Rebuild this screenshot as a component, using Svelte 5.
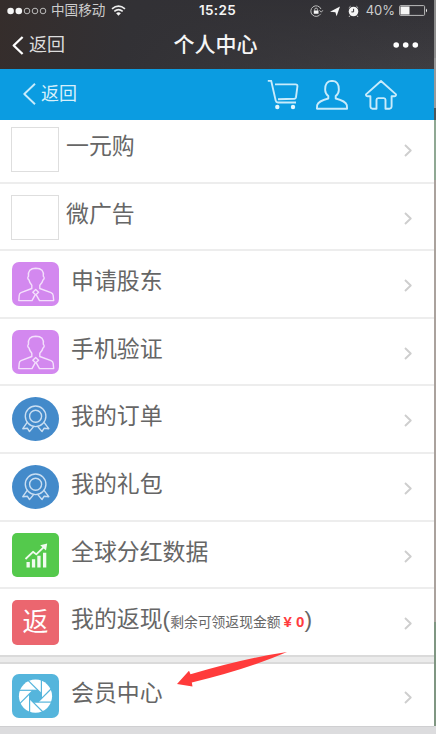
<script>
    const items = [
        { icon: 'blank', label: '一元购' },
        { icon: 'blank', label: '微广告' },
        { icon: 'person', label: '申请股东' },
        { icon: 'person', label: '手机验证' },
        { icon: 'medal', label: '我的订单' },
        { icon: 'medal', label: '我的礼包' },
        { icon: 'chart', label: '全球分红数据' },
        { icon: 'cash', label: '我的返现', note: '剩余可领返现金额', amount: '¥ 0' }
    ];
    const member = [{ icon: 'shutter', label: '会员中心' }];
    const blades = [0, 45, 90, 135, 180, 225, 270, 315];
</script>

{#snippet row(item)}
    <li class="row">
        <span class="icon {item.icon}">
            {#if item.icon === 'person'}
                <svg viewBox="0 0 47 44">
                    <path d="M19.8 26.5 9 30.7Q7.3 31.5 7.2 33.5L6.8 38.6H20L23.3 32.6 20.8 30.2 23.7 27.6 26.6 30.2 24.1 32.6 27.5 38.6H41.7L41.2 33.5Q41 31.5 39 30.7L27.8 26.5V23.2Q30.5 20.5 31 18Q33.2 16 31.3 14.3Q32.4 6.3 23.8 6.2Q15.5 6.3 16.5 14.3Q14.8 16 17 18Q17.5 20.7 19.8 23.2Z" />
                </svg>
            {:else if item.icon === 'medal'}
                <svg viewBox="0 0 47 44">
                    <circle cx="23.6" cy="19.3" r="10.3" />
                    <circle cx="23.6" cy="19.3" r="6" />
                    <path d="M15.2 25.3 10.8 31.7 15.3 31.2 17.5 34.5 21.8 29.4M32 25.3 36.8 31.7 32.2 31.2 30 34.5 25.6 29.4" />
                </svg>
            {:else if item.icon === 'chart'}
                <svg viewBox="0 0 47 44">
                    <path class="bars" d="M14.5 29h3.3v5.5h-3.3zM19.9 26.3h3.3v8.2h-3.3zM25.3 22.7h3.3v11.8h-3.3zM31 19.8h3.3v14.7H31zM28.2 12.2 35.2 10.6 34 17.5Z" />
                    <path d="M13.5 26 21 18.8 24.3 21.4 32 13.8" />
                </svg>
            {:else if item.icon === 'cash'}
                返
            {:else if item.icon === 'shutter'}
                <svg viewBox="0 0 47 44">
                    <circle class="disc" cx="23.5" cy="22.2" r="16.6" />
                    <path class="hole" d="M21 16.2h5l3.5 3.5v5L26 28.2h-5l-3.5-3.5v-5z" />
                    {#each blades as angle}
                        <path class="blade" d="M26 16.3H6" transform="rotate({angle} 23.5 22.2)" />
                    {/each}
                </svg>
            {/if}
        </span>
        <span class="label">{item.label}{#if item.note}(<small>{item.note}<b>{item.amount}</b></small>){/if}</span>
        <svg class="arrow" viewBox="0 0 8 13"><path d="M1 1 6.7 6.5 1 12" /></svg>
    </li>
{/snippet}

<div class="page">
    <div class="phone">
        <div class="top">
            <div class="status">
                <div class="carrier">
                    <svg width="40" height="8" viewBox="0 0 40 8">
                        <circle class="full" cx="3.6" cy="4" r="3.3" />
                        <circle class="full" cx="11.8" cy="4" r="3.3" />
                        <circle cx="20" cy="4" r="2.8" />
                        <circle cx="28" cy="4" r="2.8" />
                        <circle cx="36" cy="4" r="2.8" />
                    </svg>
                    <span>中国移动</span>
                    <svg class="wifi" width="15" height="11" viewBox="0 0 15 11">
                        <path d="M1 3.8Q7.5-1.6 14 3.8M3.3 6.3Q7.5 2.8 11.7 6.3" />
                        <path class="full" d="M5.1 8.2Q7.5 6.3 9.9 8.2L7.5 10.8Z" />
                    </svg>
                </div>
                <time>15:25</time>
                <div class="battery">
                    <svg width="51" height="14" viewBox="0 0 51 14">
                        <path d="M11.7 9.8A5.3 5.3 0 1 1 12 5M10.5 6.3 12.3 8.2 13.8 6.3" />
                        <path d="M5.7 6.6V5.5a1.4 1.4 0 0 1 2.8 0v1.1" />
                        <path class="full" d="M4.8 6.4h4.7v3.4H4.8zM21 7.8 31 2.4 27.6 12.3 26.4 8.3Z" />
                        <circle class="full" cx="44.5" cy="7.5" r="4.8" />
                        <path d="M39.8 3.9 41.6 2.2M49.2 3.9 47.4 2.2M41 11.5 40 13M48 11.5 49 13" />
                        <path class="hands" d="M44.6 4.8V7.9H42.4" />
                    </svg>
                    <span>40%</span>
                    <svg width="29" height="11" viewBox="0 0 29 11">
                        <rect x=".6" y=".6" width="25" height="9.8" rx="1" />
                        <path class="full" d="M1.5 1.5h9v8h-9zM27 3.5q2 2 0 4z" />
                    </svg>
                </div>
            </div>
            <div class="nav">
                <span class="back">
                    <svg width="12" height="19" viewBox="0 0 12 19"><path d="M10.6 1 1.7 9.5 10.6 18" /></svg>
                    返回
                </span>
                <h1>个人中心</h1>
                <svg class="more" width="26" height="6" viewBox="0 0 26 6">
                    <circle cx="3.2" cy="3" r="2.8" />
                    <circle cx="12.7" cy="3" r="2.8" />
                    <circle cx="22.3" cy="3" r="2.8" />
                </svg>
            </div>
        </div>

        <header>
            <span class="back">
                <svg width="13" height="22" viewBox="0 0 13 22"><path d="M12 .8 1.3 11 12 21.2" /></svg>
                返回
            </span>
            <div class="links">
                <svg width="32" height="30" viewBox="0 0 32 30">
                    <path d="M.8.9H4.2L8.7 20.6Q9.1 22.4 11 22.5H29M8 4.4H28.5Q30.6 4.5 30.4 6.5L29 17.2Q28.7 18.6 27.5 18.7L11 19.2" />
                    <circle class="wheel" cx="10.3" cy="27" r="2.2" />
                    <circle class="wheel" cx="26" cy="27" r="2.2" />
                </svg>
                <svg width="32" height="30" viewBox="0 0 32 30">
                    <path d="M12.3 18.5Q2.5 21 1.2 25L.9 28.7H31.1L30.8 25Q29.5 21 19.7 18.5V16Q22.7 13.7 22.8 10.2Q23.2 1 16 .9Q8.8 1 9.2 10.2Q9.3 13.7 12.3 16Z" />
                </svg>
                <svg width="32" height="30" viewBox="0 0 32 30">
                    <path d="M16 1 1 14.4Q.8 16.4 3 16.2H5.4V26.5Q5.6 28.6 7.6 28.7H11.5V19.8Q11.6 18.2 13.2 18.1H18.8Q20.4 18.2 20.5 19.8V28.7H24.4Q26.4 28.6 26.6 26.5V16.2H29Q31.2 16.4 31 14.4Z" />
                </svg>
            </div>
        </header>

        <ul class="list">
            {#each items as item}
                {@render row(item)}
            {/each}
        </ul>
        <ul class="list member">
            {#each member as item}
                {@render row(item)}
            {/each}
        </ul>
        <svg class="pointer" width="112" height="40" viewBox="0 0 112 40">
            <path d="M111 1Q70 7 14.5 23.3L13 19.8 1 33 16.5 35.5 15.8 31.5Q72 18 111 1Z" />
        </svg>
    </div>
    <div class="edge"></div>
</div>

<style>
    :global(body) {
        background: #dcdcde;
    }

    .page {
        display: flex;
        width: 436px;
        height: 734px;
        overflow: hidden;
        font-family: "Liberation Sans", "Noto Sans CJK SC", sans-serif;
    }

    .phone {
        position: relative;
        width: 434px;
    }

    .edge {
        width: 2px;
        height: 726px;
        background: linear-gradient(#8d8d8d 0 58px, #999 58px 108px, #4f5557 108px 120px, #8fa893 120px 180px, #aaa29d 180px 622px, #7f9682 622px);
    }

    svg {
        display: block;
        flex: none;
        fill: none;
        stroke-linejoin: round;
    }

    .top {
        height: 69px;
        background: linear-gradient(100deg, #352d2b, #323135 30%, rgba(50, 49, 53, 0)), linear-gradient(#313035, #3f3e42);
        color: #eee;
    }

    .status {
        display: grid;
        grid-template-columns: 1fr auto 1fr;
        align-items: center;
        height: 21px;
        padding: 0 6px 0 7px;
        font-size: 13.6px;
        line-height: 21px;
    }

    .status svg {
        stroke: #bbb;
        stroke-width: 1;
    }

    .status .full {
        fill: #f5f5f5;
        stroke: none;
    }

    .carrier,
    .battery {
        display: flex;
        align-items: center;
    }

    .carrier span {
        margin: 0 6px 0 4px;
        color: #ccc;
    }

    .status .wifi {
        stroke: #eee;
        stroke-width: 1.6;
    }

    .status time {
        color: #f5f5f5;
        font-family: Inter, sans-serif;
        font-size: 13.5px;
        font-weight: 600;
        letter-spacing: 0.3px;
    }

    .battery {
        justify-content: flex-end;
    }

    .battery span {
        margin: 0 4px 0 6px;
        color: #ccc;
        font-family: Inter, sans-serif;
        font-size: 13px;
    }

    .status .hands {
        stroke: #37363a;
    }

    .nav {
        display: grid;
        grid-template-columns: 1fr auto 1fr;
        align-items: center;
        height: 48px;
        padding: 0 15px 0 12px;
    }

    .back {
        display: flex;
        align-items: center;
        gap: 5px;
        font-size: 18px;
        line-height: 26px;
    }

    .nav .back {
        color: #ddd;
    }

    .nav .back svg {
        stroke: #fff;
        stroke-width: 2.3;
    }

    h1 {
        margin: 0;
        color: #f5f5f5;
        font-size: 21px;
        font-weight: 500;
        line-height: 30px;
    }

    .more {
        justify-self: end;
        fill: #fff;
    }

    header {
        display: flex;
        align-items: center;
        justify-content: space-between;
        box-sizing: border-box;
        height: 51px;
        padding: 0 37px 2px 23px;
        background: #0b9ce1;
        color: #d8f0fb;
    }

    header svg {
        stroke: #c8ebfb;
        stroke-width: 1.9;
    }

    .links {
        display: flex;
        gap: 17px;
        padding-top: 3px;
    }

    header .wheel {
        fill: #e4f6fd;
        stroke: none;
    }

    .list {
        margin: 0;
        padding: 0;
        background: #fff;
        list-style: none;
    }

    .row {
        display: flex;
        align-items: flex-start;
        box-sizing: border-box;
        height: 67.65px;
        padding: 11px 22px 0 12px;
        border-bottom: 2px solid #ededed;
    }

    .row:first-child {
        height: 63.5px;
        padding-top: 6.5px;
    }

    .row:last-child {
        height: 67.6px;
        border-bottom-color: #dadada;
    }

    .icon {
        flex: none;
        width: 47px;
        height: 44px;
        margin-right: 12px;
        border-radius: 7px;
        color: #fff;
    }

    .icon svg {
        width: 47px;
        height: 44px;
        stroke: #f4e0fc;
        stroke-width: 1.4;
    }

    .blank {
        box-sizing: border-box;
        width: 48px;
        height: 45px;
        margin: 0 7px 0 -1px;
        border: 1px solid #dedede;
        border-radius: 0;
    }

    .person {
        background: #d388ef;
    }

    .medal {
        border-radius: 50%;
        background: #438aca;
    }

    .medal svg {
        stroke: #c9def2;
    }

    .chart {
        border-radius: 5px;
        background: #54c94c;
    }

    .chart svg {
        stroke: #f0fbef;
        stroke-width: 1.8;
    }

    .chart .bars {
        fill: #f0fbef;
        stroke: none;
    }

    .cash {
        height: 45px;
        border-radius: 5px;
        background: #eb666f;
        font-size: 26px;
        line-height: 45px;
        text-align: center;
    }

    .label {
        flex: 1;
        margin-top: 3px;
        color: #666;
        font-size: 22.9px;
        line-height: 32px;
        white-space: nowrap;
    }

    .label small {
        font-size: 13.8px;
    }

    .label b {
        margin-left: 3px;
        color: #ff3b3e;
        font-size: 15px;
    }

    .arrow {
        width: 8px;
        height: 13px;
        margin-top: 17px;
        stroke: #cecece;
        stroke-width: 1.9;
    }

    .member {
        border-top: 2px solid #dadada;
        box-shadow: 0 -5px #ebebeb;
        margin-top: 5px;
    }

    .member .row:first-child {
        height: 63.5px;
        padding-top: 10.5px;
        border-bottom: 1px solid #cfcfd1;
    }

    .shutter {
        background: #55b5dc;
    }

    .shutter .disc {
        fill: #fff;
        stroke: none;
    }

    .shutter .hole {
        fill: #55b5dc;
        stroke: none;
    }

    .shutter .blade {
        stroke: #55b5dc;
        stroke-width: 1.2;
    }

    /* hand-drawn arrow lying over the last two rows */
    .pointer {
        position: absolute;
        top: 651px;
        left: 176px;
        fill: #ff3b3b;
    }
</style>
